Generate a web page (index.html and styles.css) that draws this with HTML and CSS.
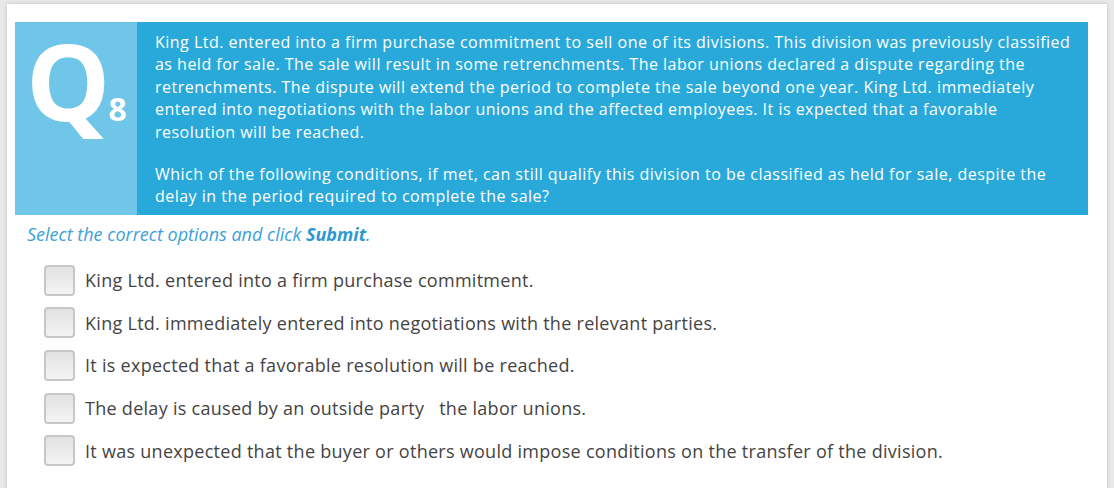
FILE: index.html
```html
<!DOCTYPE html>
<html>
<head>
<meta charset="utf-8">
<link rel="stylesheet" href="styles.css">
</head>
<body>
<div class="card">
  <div class="question">
    <div class="qbadge"><span class="q">Q</span><span class="num">8</span></div>
    <div class="qtext">
      <p>King Ltd. entered into a firm purchase commitment to sell one of its divisions. This division was previously classified as held for sale. The sale will result in some retrenchments. The labor unions declared a dispute regarding the retrenchments. The dispute will extend the period to complete the sale beyond one year. King Ltd. immediately entered into negotiations with the labor unions and the affected employees. It is expected that a favorable resolution will be reached.</p>
      <p>Which of the following conditions, if met, can still qualify this division to be classified as held for sale, despite the delay in the period required to complete the sale?</p>
    </div>
  </div>
  <p class="instruction">Select the correct options and click <b>Submit</b>.</p>
  <ul class="options">
    <li><span class="box"></span><span class="label">King Ltd. entered into a firm purchase commitment.</span></li>
    <li><span class="box"></span><span class="label">King Ltd. immediately entered into negotiations with the relevant parties.</span></li>
    <li><span class="box"></span><span class="label">It is expected that a favorable resolution will be reached.</span></li>
    <li><span class="box"></span><span class="label">The delay is caused by an outside party &nbsp; the labor unions.</span></li>
    <li><span class="box"></span><span class="label">It was unexpected that the buyer or others would impose conditions on the transfer of the division.</span></li>
  </ul>
</div>
</body>
</html>
```
FILE: styles.css
```css
html, body {
  margin: 0;
  padding: 0;
}
body {
  background: #e9e9e9;
  font-family: "Open Sans", "Liberation Sans", sans-serif;
  height: 488px;
  overflow: hidden;
}
.card {
  margin: 4px 7px 0 7px;
  width: 1100px;
  height: 490px;
  background: #fff;
  box-shadow: 0 0 4px rgba(0,0,0,0.18);
  padding: 18px 0 0 8px;
  box-sizing: border-box;
}
.question {
  display: flex;
  width: 1073px;
  height: 193px;
  background: #29a9da;
}
.qbadge {
  width: 122px;
  flex: none;
  background: #6fc6e9;
  color: #fff;
  font-weight: 700;
  display: flex;
  align-items: flex-start;
  padding: 5px 0 0 11px;
  box-sizing: border-box;
}
.q {
  font-size: 106px;
  line-height: 106px;
}
.num {
  font-size: 32px;
  line-height: 32px;
  margin-top: 66px;
  margin-left: -2px;
}
.qtext {
  width: 920px;
  padding: 9px 0 0 18px;
  color: #fff;
  font-size: 16px;
  letter-spacing: 0.48px;
  line-height: 22.4px;
}
.qtext p {
  margin: 0 0 19.6px 0;
}
.instruction {
  margin: 7px 0 0 12px;
  font-size: 18px;
  font-style: italic;
  color: #3ba1d9;
  line-height: 24px;
}
.instruction b {
  font-weight: 700;
  color: #2d98d2;
}
.options {
  list-style: none;
  margin: 13px 0 0 29px;
  padding: 0;
}
.options li {
  display: flex;
  align-items: center;
  height: 42.6px;
  font-size: 18px;
  letter-spacing: 0.28px;
  color: #444;
}
.box {
  width: 27px;
  height: 27px;
  border: 2px solid #c7c7c7;
  border-radius: 4px;
  background: linear-gradient(#e2e2e2, #f4f4f4);
  flex: none;
  margin-right: 10px;
}
.label {
  line-height: 24px;
}
```
